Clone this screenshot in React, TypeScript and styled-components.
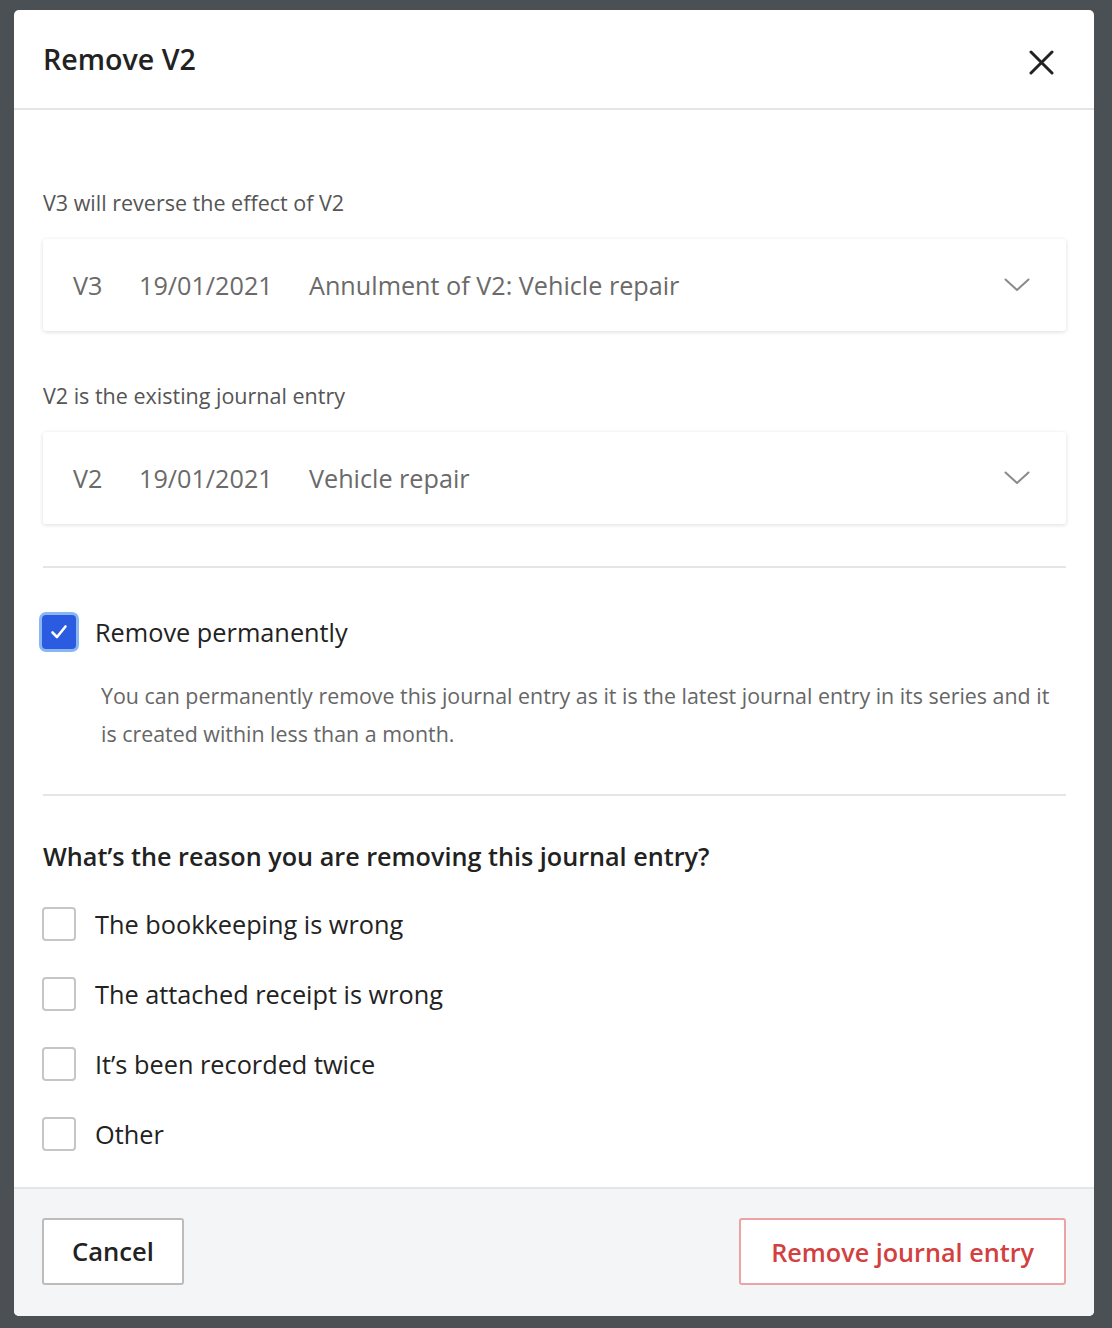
import { createGlobalStyle } from "styled-components"
import styled from "styled-components"

const GlobalStyle = createGlobalStyle`
  html, body {
    margin: 0;
    padding: 0;
  }
  body {
    background: #4b5054;
    font-family: "Open Sans", "Noto Sans", sans-serif;
    color: #222;
  }
`

const Backdrop = styled.div`
  min-height: 1328px;
  padding: 10px 18px 12px 14px;
  box-sizing: border-box;
`

const Modal = styled.div`
  width: 1080px;
  height: 1306px;
  background: #fff;
  border-radius: 5px;
  display: flex;
  flex-direction: column;
  overflow: hidden;
`

const Header = styled.div`
  height: 100px;
  border-bottom: 2px solid #e4e5e7;
  display: flex;
  align-items: center;
  justify-content: space-between;
  padding: 0 39px 0 29px;
  box-sizing: border-box;
`

const Title = styled.h2`
  margin: 0;
  font-size: 28.6px;
  font-weight: 600;
  color: #222;
  margin-top: -1px;
`

const CloseButton = styled.button`
  border: none;
  background: none;
  padding: 0;
  width: 28px;
  height: 28px;
  display: flex;
  align-items: center;
  justify-content: center;
  cursor: pointer;
  margin-top: 6px;
`

const Body = styled.div`
  flex: 1;
  padding: 79px 28px 0 29px;
`

const FieldLabel = styled.div`
  font-size: 21.5px;
  color: #555;
  line-height: 28px;
  margin-bottom: 22px;
`

const SelectBox = styled.div<{ $last?: boolean }>`
  height: 92px;
  border-radius: 3px;
  box-shadow: 0 1px 4px rgba(0, 0, 0, 0.14);
  display: flex;
  align-items: center;
  padding: 0 36px 0 30px;
  font-size: 25.2px;
  color: #6a6a6a;
  margin-bottom: ${(p) => (p.$last ? "42px" : "51px")};
`

const Cell = styled.span<{ $w?: number }>`
  width: ${(p) => (p.$w ? `${p.$w}px` : "auto")};
  flex: ${(p) => (p.$w ? "none" : "1")};
`

const Divider = styled.hr`
  border: none;
  border-top: 2px solid #e4e5e7;
  margin: 0;
`

const PermanentSection = styled.div`
  padding: 44px 0 41px;
`

const CheckRow = styled.label`
  display: flex;
  align-items: center;
  gap: 19px;
  font-size: 25.3px;
  color: #222;
  height: 40px;
  margin-left: -1px;
`

const Box = styled.span<{ $checked?: boolean }>`
  width: 34px;
  height: 34px;
  box-sizing: border-box;
  border-radius: 4px;
  flex: none;
  display: flex;
  align-items: center;
  justify-content: center;
  border: ${(p) => (p.$checked ? "none" : "2px solid #c6c6c6")};
  background: ${(p) => (p.$checked ? "#2a5be0" : "#fff")};
  box-shadow: ${(p) => (p.$checked ? "0 0 0 3px #8ab7f4" : "none")};
`

const Description = styled.p`
  margin: 25px 0 0 58px;
  font-size: 21.4px;
  line-height: 38px;
  color: #666;
`

const ReasonSection = styled.div`
  padding-top: 43px;
`

const Question = styled.h3`
  margin: 0 0 31px;
  font-size: 25.2px;
  font-weight: 600;
  color: #222;
  line-height: 34px;
`

const Options = styled.div`
  display: flex;
  flex-direction: column;
  gap: 30px;
`

const Footer = styled.div`
  height: 129px;
  background: #f4f5f7;
  border-top: 2px solid #e4e5e7;
  box-sizing: border-box;
  display: flex;
  align-items: center;
  justify-content: space-between;
  padding: 0 28px 2px 28px;
`

const Button = styled.button<{ $danger?: boolean }>`
  height: 67px;
  padding: 0 ${(p) => (p.$danger ? "30px" : "28px")};
  background: #fff;
  border-radius: 3px;
  border: 2px solid ${(p) => (p.$danger ? "#eba3a3" : "#bcbcbc")};
  color: ${(p) => (p.$danger ? "#d2403f" : "#222")};
  font-family: "Open Sans", "Noto Sans", sans-serif;
  font-size: ${(p) => (p.$danger ? "25.2px" : "25.6px")};
  font-weight: 600;
  cursor: pointer;
`

const Chevron = () => (
  <svg width="26" height="14" viewBox="0 0 26 14" fill="none">
    <path d="M1.5 1.5 L13 12 L24.5 1.5" stroke="#8a8a8a" strokeWidth="2" strokeLinecap="round" strokeLinejoin="round" />
  </svg>
)

const CloseIcon = () => (
  <svg width="25" height="25" viewBox="0 0 25 25" fill="none">
    <path d="M2 2 L23 23 M23 2 L2 23" stroke="#222" strokeWidth="3" strokeLinecap="round" />
  </svg>
)

const Tick = () => (
  <svg width="18" height="16" viewBox="0 0 18 16" fill="none">
    <path d="M2.5 8.5 L7 13 L15.5 2.5" stroke="#fff" strokeWidth="2.6" strokeLinecap="round" strokeLinejoin="round" />
  </svg>
)

const reasons = [
  "The bookkeeping is wrong",
  "The attached receipt is wrong",
  "It\u2019s been recorded twice",
  "Other",
]

export default function App() {
  return (
    <>
      <GlobalStyle />
      <Backdrop>
        <Modal>
          <Header>
            <Title>Remove V2</Title>
            <CloseButton aria-label="Close">
              <CloseIcon />
            </CloseButton>
          </Header>
          <Body>
            <FieldLabel>V3 will reverse the effect of V2</FieldLabel>
            <SelectBox>
              <Cell $w={66}>V3</Cell>
              <Cell $w={170}>19/01/2021</Cell>
              <Cell>Annulment of V2: Vehicle repair</Cell>
              <Chevron />
            </SelectBox>
            <FieldLabel>V2 is the existing journal entry</FieldLabel>
            <SelectBox $last>
              <Cell $w={66}>V2</Cell>
              <Cell $w={170}>19/01/2021</Cell>
              <Cell>Vehicle repair</Cell>
              <Chevron />
            </SelectBox>
            <Divider />
            <PermanentSection>
              <CheckRow>
                <Box $checked>
                  <Tick />
                </Box>
                Remove permanently
              </CheckRow>
              <Description>
                You can permanently remove this journal entry as it is the latest journal entry in its series and it is
                created within less than a month.
              </Description>
            </PermanentSection>
            <Divider />
            <ReasonSection>
              <Question>What’s the reason you are removing this journal entry?</Question>
              <Options>
                {reasons.map((r) => (
                  <CheckRow key={r}>
                    <Box />
                    {r}
                  </CheckRow>
                ))}
              </Options>
            </ReasonSection>
          </Body>
          <Footer>
            <Button>Cancel</Button>
            <Button $danger>Remove journal entry</Button>
          </Footer>
        </Modal>
      </Backdrop>
    </>
  )
}
